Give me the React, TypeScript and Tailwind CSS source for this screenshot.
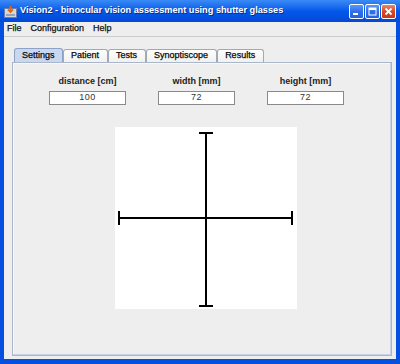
import React from "react";

const menuItems = ["File", "Configuration", "Help"];
const tabs = ["Settings", "Patient", "Tests", "Synoptiscope", "Results"];

const fields = [
  { label: "distance [cm]", value: "100" },
  { label: "width [mm]", value: "72" },
  { label: "height [mm]", value: "72" },
];

const TitleButton = ({ kind }: { kind: "min" | "max" | "close" }) => {
  const isClose = kind === "close";
  return (
    <div
      className={`flex h-[15px] w-[15px] items-center justify-center rounded-[2px] border border-white ${
        isClose
          ? "bg-gradient-to-b from-[#e8876a] via-[#d9481f] to-[#c6391a]"
          : "bg-gradient-to-b from-[#5d97f6] via-[#2f6fe9] to-[#2a62dc]"
      }`}
    >
      <svg width="11" height="11" viewBox="0 0 11 11">
        {kind === "min" && <rect x="2" y="7" width="5" height="2" fill="#fff" />}
        {kind === "max" && (
          <>
            <rect x="2" y="2" width="7" height="7" fill="none" stroke="#fff" strokeWidth="1" />
            <rect x="2" y="2" width="7" height="2" fill="#fff" />
          </>
        )}
        {kind === "close" && (
          <path d="M2.5 2.5 L8.5 8.5 M8.5 2.5 L2.5 8.5" stroke="#fff" strokeWidth="1.8" />
        )}
      </svg>
    </div>
  );
};

const App = () => {
  return (
    <div className="flex h-[364px] w-[400px] flex-col overflow-hidden bg-[#0550e0] font-['Liberation_Sans',Arial,sans-serif] text-black">
      {/* title bar */}
      <div className="flex h-[22px] shrink-0 items-center bg-gradient-to-b from-[#3a8af5] via-[#0458ea] to-[#0348d8] pl-[4px] pr-[4px]">
        <svg width="13" height="13" viewBox="0 0 13 13" className="mr-[3px]">
          <rect x="0.5" y="3.5" width="12" height="9" fill="#d8d8d8" stroke="#6a7fa8" />
          <rect x="2" y="9" width="9" height="2" fill="#9aa4b8" />
          <path d="M6.5 1 L6.5 7 M4 4.5 L6.5 7 L9 4.5" stroke="#e06a1c" strokeWidth="1.8" fill="none" />
        </svg>
        <span className="text-[9.2px] font-bold text-white [text-shadow:1px_1px_0_#0a2a8a]">
          Vision2 - binocular vision assessment using shutter glasses
        </span>
        <div className="ml-auto flex gap-[1px]">
          <TitleButton kind="min" />
          <TitleButton kind="max" />
          <TitleButton kind="close" />
        </div>
      </div>

      {/* window body */}
      <div className="mx-[4px] mb-[5px] flex flex-1 flex-col bg-[#eeeeee]">
        {/* menu bar */}
        <div className="flex h-[15px] items-center gap-[9px] border-b border-[#cccccc] pl-[3px] text-[9px] text-[#111] [-webkit-text-stroke:0.25px_#111]">
          {menuItems.map((m) => (
            <span key={m}>{m}</span>
          ))}
        </div>

        {/* tabs */}
        <div className="mt-[11px] flex items-end pl-[10px]">
          {tabs.map((t, i) => (
            <div
              key={t}
              className={`flex items-center rounded-t-[3px] border border-b-0 text-[9px] [-webkit-text-stroke:0.25px_#111] ${
                i === 0
                  ? "h-[14px] border-[#8da2c4] bg-[#c9d8ef] px-[7px]"
                  : "h-[13px] border-[#a2a9b4] bg-gradient-to-b from-[#fdfdfd] to-[#f1f1ee] px-[7.5px]"
              }`}
            >
              {t}
            </div>
          ))}
        </div>

        {/* tab panel */}
        <div className="mb-[3px] ml-[8px] mr-[4px] flex flex-1 flex-col border border-[#a9b6cc] shadow-[inset_-1px_-1px_0_#c8d4e6,inset_1px_1px_0_#f6f8fb]">
          <div className="flex pl-[20px] pt-[13px]">
            {fields.map((f) => (
              <div key={f.label} className="flex w-[109px] flex-col items-center">
                <span className="h-[11px] text-[9px] font-bold leading-[11px] text-[#222]">{f.label}</span>
                <div className="mt-[4px] flex h-[14px] w-[77px] items-center justify-center border border-[#8a8a8a] bg-white text-[9px] tracking-[0.5px] text-[#333]">
                  {f.value}
                </div>
              </div>
            ))}
          </div>

          <div className="mt-[22px] pl-[102px]">
            <div className="h-[182px] w-[182px] bg-white">
              <svg width="182" height="182" viewBox="0 0 182 182">
                <g stroke="#000" strokeWidth="2">
                  <line x1="91" y1="6" x2="91" y2="179" />
                  <line x1="84" y1="6" x2="98" y2="6" />
                  <line x1="84" y1="179" x2="98" y2="179" />
                  <line x1="4" y1="91" x2="177" y2="91" />
                  <line x1="4" y1="84" x2="4" y2="98" />
                  <line x1="177" y1="84" x2="177" y2="98" />
                </g>
              </svg>
            </div>
          </div>
        </div>
      </div>
    </div>
  );
};

export default App;
